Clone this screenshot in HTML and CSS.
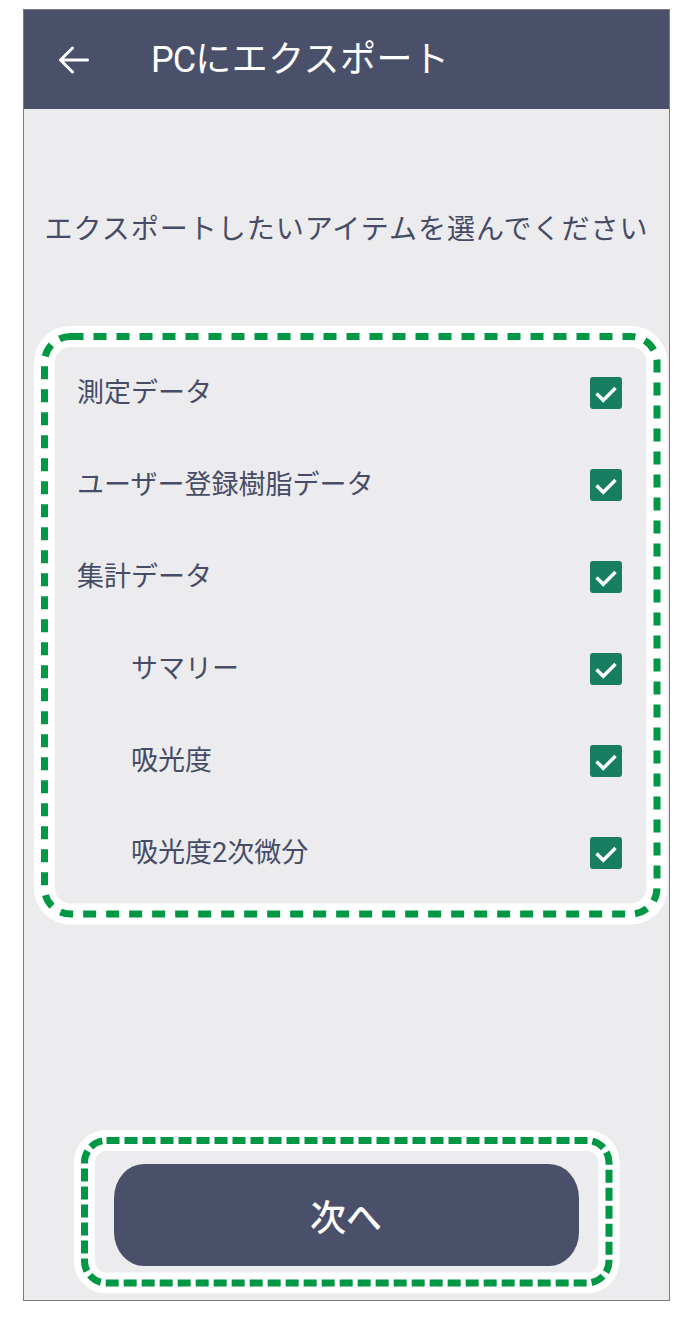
FILE: index.html
```html
<!DOCTYPE html>
<html lang="ja">
<head>
<meta charset="utf-8">
<title>PCにエクスポート</title>
<link rel="stylesheet" href="styles.css">
</head>
<body>
<div class="screen">
  <header class="appbar">
    <svg class="back" width="32" height="28" viewBox="0 0 32 28" aria-hidden="true">
      <path d="M30.5 14H3.5M15.5 2L3.5 14L15.5 26" fill="none" stroke="#ffffff" stroke-width="3" stroke-linecap="round" stroke-linejoin="round"/>
    </svg>
    <h1 class="title"><span class="latin">PC</span><span class="kana">にエクスポート</span></h1>
  </header>
  <main class="body">
    <p class="prompt">エクスポートしたいアイテムを選んでください</p>
    <div class="list-wrap">
      <svg class="mark" width="634" height="599" viewBox="0 0 634 599" aria-hidden="true">
        <rect x="10.5" y="10.5" width="612.5" height="577.5" rx="26" fill="none" stroke="#ffffff" stroke-width="21"/>
        <rect x="10.5" y="10.5" width="612.5" height="577.5" rx="26" fill="none" stroke="#009844" stroke-width="7" stroke-dasharray="13 10"/>
      </svg>
      <ul class="list">
        <li class="row"><span class="label">測定データ</span><span class="check"><svg width="32" height="32" viewBox="0 0 32 32"><rect width="32" height="32" rx="3" fill="#177e62"/><path d="M6.5 16.5L13.3 23.3L25.5 11" fill="none" stroke="#fff" stroke-width="3.4"/></svg></span></li>
        <li class="row"><span class="label">ユーザー登録樹脂データ</span><span class="check"><svg width="32" height="32" viewBox="0 0 32 32"><rect width="32" height="32" rx="3" fill="#177e62"/><path d="M6.5 16.5L13.3 23.3L25.5 11" fill="none" stroke="#fff" stroke-width="3.4"/></svg></span></li>
        <li class="row"><span class="label">集計データ</span><span class="check"><svg width="32" height="32" viewBox="0 0 32 32"><rect width="32" height="32" rx="3" fill="#177e62"/><path d="M6.5 16.5L13.3 23.3L25.5 11" fill="none" stroke="#fff" stroke-width="3.4"/></svg></span></li>
        <li class="row sub"><span class="label">サマリー</span><span class="check"><svg width="32" height="32" viewBox="0 0 32 32"><rect width="32" height="32" rx="3" fill="#177e62"/><path d="M6.5 16.5L13.3 23.3L25.5 11" fill="none" stroke="#fff" stroke-width="3.4"/></svg></span></li>
        <li class="row sub"><span class="label">吸光度</span><span class="check"><svg width="32" height="32" viewBox="0 0 32 32"><rect width="32" height="32" rx="3" fill="#177e62"/><path d="M6.5 16.5L13.3 23.3L25.5 11" fill="none" stroke="#fff" stroke-width="3.4"/></svg></span></li>
        <li class="row sub"><span class="label">吸光度2次微分</span><span class="check"><svg width="32" height="32" viewBox="0 0 32 32"><rect width="32" height="32" rx="3" fill="#177e62"/><path d="M6.5 16.5L13.3 23.3L25.5 11" fill="none" stroke="#fff" stroke-width="3.4"/></svg></span></li>
      </ul>
    </div>
    <div class="button-wrap">
      <svg class="mark" width="546" height="164" viewBox="0 0 546 164" aria-hidden="true">
        <rect x="10.5" y="10.5" width="524.5" height="142.5" rx="22" fill="none" stroke="#ffffff" stroke-width="21"/>
        <rect x="10.5" y="10.5" width="524.5" height="142.5" rx="22" fill="none" stroke="#009844" stroke-width="7" stroke-dasharray="13 5"/>
      </svg>
      <button class="next" type="button">次へ</button>
    </div>
  </main>
</div>
</body>
</html>
```

FILE: styles.css
```css
html, body {
  margin: 0;
  padding: 0;
  background: #ffffff;
}

body {
  font-family: Roboto, "Noto Sans CJK JP", sans-serif;
  color: #474c66;
}

.screen {
  margin: 9px 0 0 23px;
  width: 645px;
  height: 1290px;
  border: 1px solid #7b7b7b;
  background: #ececee;
  display: flex;
  flex-direction: column;
}

.appbar {
  height: 99px;
  flex: none;
  background: #4a5069;
  display: flex;
  align-items: center;
  padding-left: 33px;
  box-sizing: border-box;
}

.back {
  flex: none;
  display: block;
}

.title {
  margin: 0 0 0 62px;
  font-size: 36px;
  font-weight: 400;
  color: #ffffff;
  line-height: 1;
  white-space: nowrap;
}

.title .latin {
  letter-spacing: -1px;
}

.title .kana {
  letter-spacing: 0.5px;
}

.body {
  flex: 1;
  display: flex;
  flex-direction: column;
  padding-bottom: 6px;
}

.prompt {
  margin: 101px 0 0;
  font-size: 28px;
  line-height: 40px;
  letter-spacing: 1px;
  text-align: center;
  white-space: nowrap;
}

.list-wrap {
  position: relative;
  margin: 76px 0 0 10px;
  width: 634px;
  height: 599px;
  box-sizing: border-box;
  padding: 21px 46px 26px 43px;
}

.mark {
  position: absolute;
  left: 0;
  top: 0;
  pointer-events: none;
}

.list {
  position: relative;
  list-style: none;
  margin: 0;
  padding: 0;
}

.row {
  height: 92px;
  display: flex;
  align-items: center;
  justify-content: space-between;
}

.row.sub .label {
  padding-left: 54px;
}

.label {
  font-size: 27px;
  line-height: 1;
  white-space: nowrap;
}

.check {
  display: block;
  width: 32px;
  height: 32px;
}

.check svg {
  display: block;
}

.button-wrap {
  position: relative;
  margin: auto auto 0;
  width: 546px;
  height: 164px;
  box-sizing: border-box;
  padding: 34px 41px 28px 40px;
}

.next {
  position: relative;
  display: block;
  width: 100%;
  height: 100%;
  border: 0;
  border-radius: 30px / 34px;
  background: #4a5069;
  color: #ffffff;
  font-family: Roboto, "Noto Sans CJK JP", sans-serif;
  font-size: 36px;
  font-weight: 500;
  padding: 0;
}
```
